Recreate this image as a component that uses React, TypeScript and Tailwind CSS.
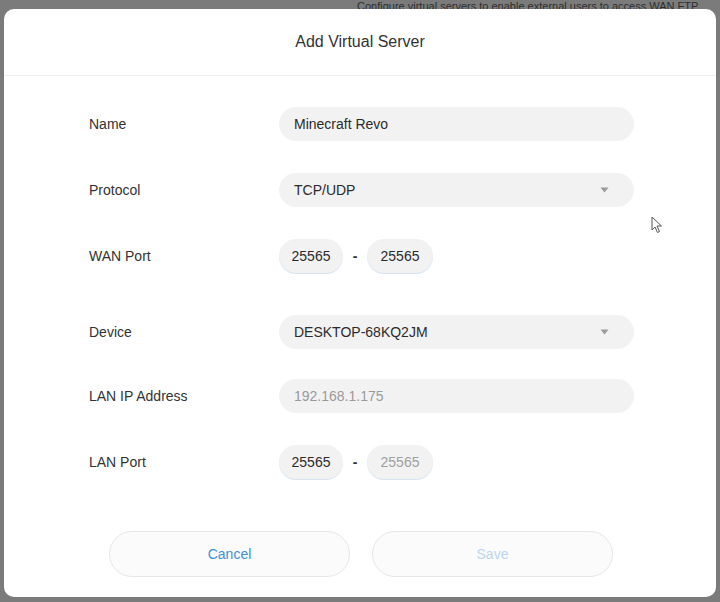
import React from 'react';

const Chevron = () => (
  <svg width="9" height="6" viewBox="0 0 9 6" className="shrink-0">
    <path d="M0.5 0.5 L8.5 0.5 L4.5 5.5 Z" fill="#9a9a9a" />
  </svg>
);

const Row = ({ label, className, children }: { label: string; className?: string; children: React.ReactNode }) => (
  <div className={`flex items-center h-[34px] ${className ?? ''}`}>
    <div className="w-[190px] text-[14px] text-[#333]">{label}</div>
    {children}
  </div>
);

const Field = ({ value, muted, select }: { value: string; muted?: boolean; select?: boolean }) => (
  <div className="flex items-center justify-between w-[355px] h-[34px] rounded-full bg-[#f2f2f2] pl-[15px] pr-[25px]">
    <span className={`text-[14px] ${muted ? 'text-[#9a9a9a]' : 'text-[#2b2b2b]'}`}>{value}</span>
    {select && <Chevron />}
  </div>
);

const PortBox = ({ value, muted, wide }: { value: string; muted?: boolean; wide?: boolean }) => (
  <div
    className={`flex items-center justify-center h-[34px] ${wide ? 'w-[66px]' : 'w-[64px]'} rounded-full bg-[#f2f2f2] shadow-[0_1px_0_#d6e4f2] text-[14px] ${muted ? 'text-[#a0a0a0]' : 'text-[#2b2b2b]'}`}
  >
    {value}
  </div>
);

const PortRange = ({ from, to, mutedTo }: { from: string; to: string; mutedTo?: boolean }) => (
  <div className="flex items-center">
    <PortBox value={from} />
    <span className="w-[24px] text-center text-[14px] font-bold text-[#333]">-</span>
    <PortBox value={to} muted={mutedTo} wide />
  </div>
);

export default function App() {
  return (
    <div className="relative w-[720px] h-[602px] overflow-hidden bg-[#7b7b7b] font-['Liberation_Sans',Arial,sans-serif]">
      <div className="-mt-[2px] pl-[357px] text-[11px] text-[#2e2e2e] whitespace-nowrap">
        Configure virtual servers to enable external users to access WAN FTP
      </div>

      {/* modal */}
      <div className="absolute left-[4px] top-[9px] w-[712px] h-[588px] bg-white rounded-[10px] flex flex-col">
        <div className="h-[67px] flex items-center justify-center border-b border-[#ededed] text-[16px] text-[#333]">
          Add Virtual Server
        </div>

        <div className="pl-[85px] pt-[31px] flex flex-col">
          <Row label="Name">
            <Field value="Minecraft Revo" />
          </Row>
          <Row label="Protocol" className="mt-[32px]">
            <Field value="TCP/UDP" select />
          </Row>
          <Row label="WAN Port" className="mt-[32px]">
            <PortRange from="25565" to="25565" />
          </Row>
          <Row label="Device" className="mt-[42px]">
            <Field value="DESKTOP-68KQ2JM" select />
          </Row>
          <Row label="LAN IP Address" className="mt-[30px]">
            <Field value="192.168.1.175" muted />
          </Row>
          <Row label="LAN Port" className="mt-[32px]">
            <PortRange from="25565" to="25565" mutedTo />
          </Row>
        </div>

        <div className="flex gap-[22px] pl-[105px] mt-[52px]">
          <button className="w-[241px] h-[46px] rounded-full border border-[#e6e6e6] bg-[#fbfbfb] text-[14px] text-[#3f8fd2]">
            Cancel
          </button>
          <button className="w-[241px] h-[46px] rounded-full border border-[#e6e6e6] bg-[#fbfbfb] text-[14px] text-[#bcd5ee]">
            Save
          </button>
        </div>
      </div>

      {/* mouse pointer */}
      <svg className="absolute left-[651px] top-[216px]" width="12" height="18" viewBox="0 0 12 18">
        <path d="M1 1 L1 14 L4 11 L6.5 16.5 L8.5 15.5 L6 10 L10.5 10 Z" fill="#fff" stroke="#555" strokeWidth="1" strokeLinejoin="round" />
      </svg>
    </div>
  );
}
